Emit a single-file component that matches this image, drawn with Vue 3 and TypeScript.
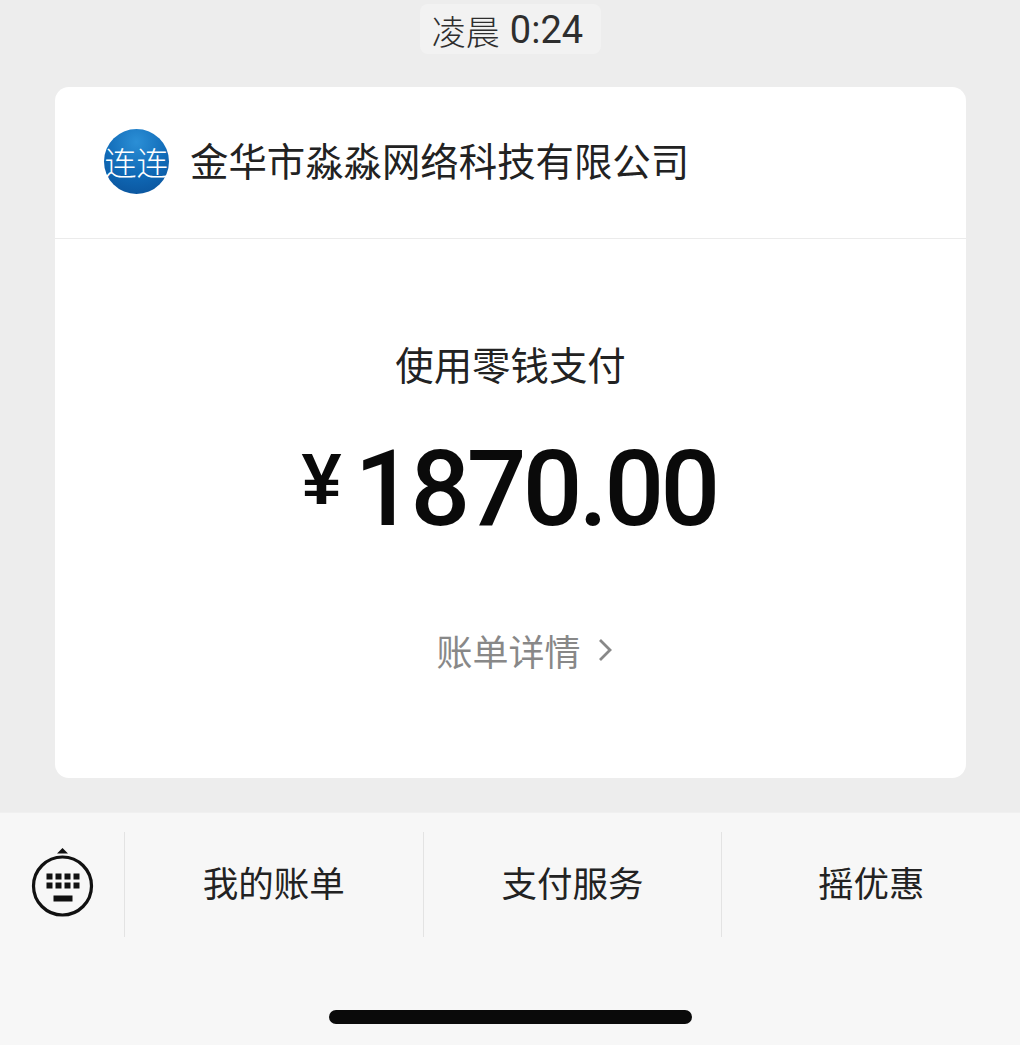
<template>
  <div class="page">
    <div class="time-row">
      <span class="time-pill">凌晨<span class="time-num">0:24</span></span>
    </div>

    <section class="card">
      <header class="card-head">
        <div class="logo"><span>连连</span></div>
        <span class="merchant">{{ merchant }}</span>
      </header>
      <div class="card-body">
        <div class="pay-label">使用零钱支付</div>
        <div class="amount">
          <span class="currency">¥</span>
          <span class="digits">{{ amount }}</span>
        </div>
        <div class="detail">
          <span>账单详情</span>
          <svg class="chevron" width="14" height="26" viewBox="0 0 14 26">
            <path d="M2 3 L12 13 L2 23" fill="none" stroke="#888" stroke-width="2.8" />
          </svg>
        </div>
      </div>
    </section>

    <nav class="menu-bar">
      <div class="menu-row">
        <div class="keyboard-btn">
          <svg width="64" height="74" viewBox="0 0 64 74">
            <path d="M31.5 0 L37 5.5 H26 Z" fill="#111" />
            <circle cx="31.5" cy="38" r="29" fill="none" stroke="#111" stroke-width="3.2" />
            <g fill="#111">
              <rect v-for="key in keys" :key="key.id" :x="key.x" :y="key.y" width="6" height="6" />
              <rect x="22.5" y="47.5" width="19" height="6" />
            </g>
          </svg>
        </div>
        <div v-for="item in menuItems" :key="item" class="menu-item">{{ item }}</div>
      </div>
      <div class="home-row">
        <div class="home-bar"></div>
      </div>
    </nav>
  </div>
</template>

<script setup lang="ts">
const merchant = '金华市淼淼网络科技有限公司';
const amount = '1870.00';
const menuItems = ['我的账单', '支付服务', '摇优惠'];

// two rows of four keys on the keyboard glyph
const keys: { id: number; x: number; y: number }[] = [];
for (let row = 0; row < 2; row++) {
  for (let col = 0; col < 4; col++) {
    keys.push({ id: row * 4 + col, x: 15.5 + col * 9, y: 25.5 + row * 9 });
  }
}
</script>

<style>
html,
body {
  margin: 0;
  background: #ededed;
}
</style>

<style scoped>
.page {
  width: 1020px;
  height: 1045px;
  display: flex;
  flex-direction: column;
  background: #ededed;
  font-family: "Noto Sans CJK SC", "Liberation Sans", sans-serif;
  overflow: hidden;
}

.time-row {
  display: flex;
  justify-content: center;
  padding-top: 4px;
  height: 87px;
  box-sizing: border-box;
}

.time-pill {
  width: 181px;
  height: 50px;
  display: flex;
  align-items: center;
  justify-content: center;
  gap: 10px;
  padding: 2px 5px 0 0;
  box-sizing: border-box;
  background: #f2f2f2;
  border-radius: 8px;
  color: #2e2e2e;
  font-size: 34px;
  font-weight: 300;
}

.time-num {
  font-family: Roboto, "Liberation Sans", sans-serif;
  font-size: 38px;
  font-weight: 400;
  color: #2e2e2e;
}

.card {
  width: 911px;
  height: 691px;
  margin-left: 55px;
  background: #fff;
  border-radius: 14px;
  display: flex;
  flex-direction: column;
}

.card-head {
  height: 152px;
  box-sizing: border-box;
  border-bottom: 1px solid #ebebeb;
  display: flex;
  align-items: center;
  padding: 0 0 3px 49px;
  gap: 20px;
}

.logo {
  width: 65px;
  height: 65px;
  border-radius: 50%;
  background: radial-gradient(circle at 50% 20%, #2b8fd6 0%, #0f68b5 55%, #0a4f96 100%);
  display: flex;
  align-items: center;
  justify-content: center;
  color: #fff;
  font-size: 32px;
  font-weight: 300;
  line-height: 1;
  white-space: nowrap;
}

.merchant {
  font-size: 38.4px;
  color: #222;
  white-space: nowrap;
  margin-left: 1px;
  margin-bottom: 4px;
}

.card-body {
  flex: 1;
  display: flex;
  flex-direction: column;
  align-items: center;
}

.pay-label {
  margin-top: 96px;
  font-size: 38.4px;
  line-height: 56px;
  color: #222;
}

.amount {
  margin-top: 39px;
  display: flex;
  align-items: flex-start;
  color: #0a0a0a;
  margin-left: -3px;
}

.currency {
  font-family: "Liberation Sans", sans-serif;
  font-size: 72px;
  font-weight: 700;
  line-height: 70px;
  margin-top: 14px;
  margin-right: 13px;
}

.digits {
  font-family: Roboto, "Liberation Sans", sans-serif;
  font-weight: 500;
  font-size: 105px;
  line-height: 120px;
  letter-spacing: -3.6px;
}

.detail {
  margin-top: 74px;
  margin-left: 27px;
  display: flex;
  align-items: center;
  gap: 17px;
  color: #888;
  font-size: 36px;
  line-height: 52px;
}

.menu-bar {
  margin-top: 34px;
  flex: 1;
  display: flex;
  flex-direction: column;
  background: #f7f7f7;
  border-top: 1px solid #f0f0f0;
}

.menu-row {
  margin-top: 19px;
  height: 105px;
  display: flex;
}

.keyboard-btn {
  width: 124px;
  display: flex;
  align-items: center;
  justify-content: center;
  padding-left: 2px;
  box-sizing: border-box;
}

.menu-item {
  width: 299px;
  display: flex;
  align-items: center;
  justify-content: center;
  border-left: 1px solid #e3e3e3;
  box-sizing: border-box;
  padding-bottom: 6px;
  font-size: 35.5px;
  color: #222;
}

.home-row {
  margin-top: 73px;
  display: flex;
  justify-content: center;
}

.home-bar {
  width: 363px;
  height: 14px;
  border-radius: 7px;
  background: #0a0a0a;
}
</style>
